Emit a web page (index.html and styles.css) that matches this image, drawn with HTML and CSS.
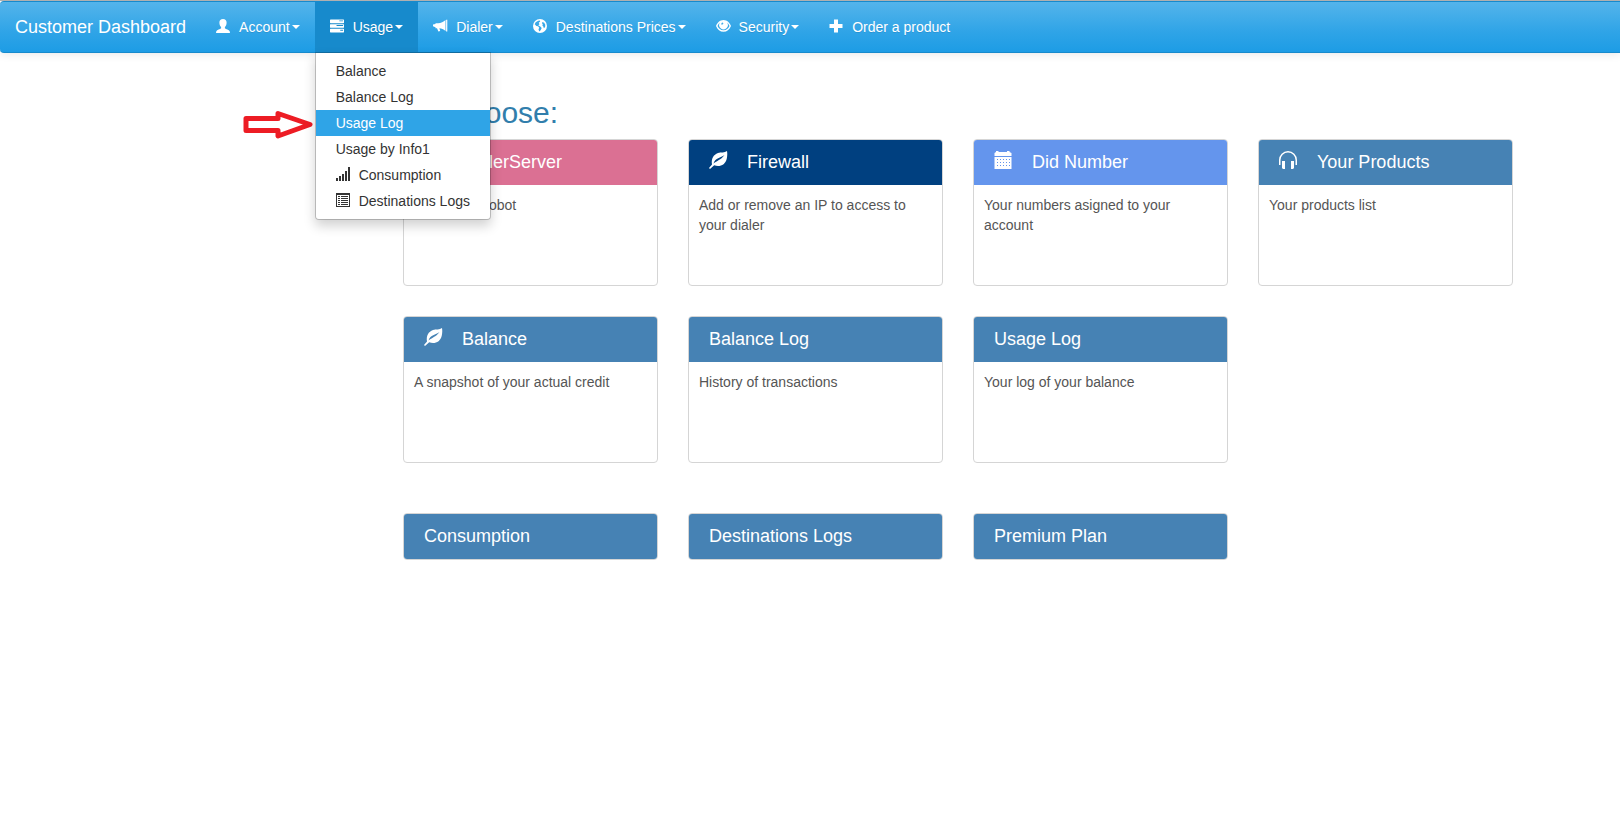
FILE: index.html
```html
<!DOCTYPE html>
<html lang="en">
<head>
  <meta charset="UTF-8">
  <meta name="viewport" content="width=device-width, initial-scale=1">
  <title>Customer Dashboard</title>
  <link rel="stylesheet" href="styles.css">
</head>
<body>
  <nav class="navbar">
    <a class="navbar-brand" href="#">Customer Dashboard</a>
    <ul class="nav">
      <li>
        <a href="#"><svg class="icon" viewBox="0 0 14 14"><path d="M7 0C9.300 0 10.600 1.300 10.600 3.500C10.600 5.500 9.900 7 8.900 8V9.200C9.900 10.200 13 10.800 13.700 12.200L14 14H0L.3 12.200C1 10.800 4.100 10.200 5.100 9.200V8C4.100 7 3.400 5.500 3.400 3.500C3.400 1.300 4.700 0 7 0Z"/></svg>Account<span class="caret"></span></a>
      </li>
      <li class="open">
        <a href="#"><svg class="icon" viewBox="0 0 15 14"><path fill-rule="evenodd" d="M.5 0H14.500L15 .5V3.500L14.500 4H.5L0 3.500V.5ZM10 1V2H14V1ZM.5 5H14.500L15 5.500V8.500L14.500 9H.5L0 8.500V5.500ZM7 6V7H14V6ZM.5 10H14.500L15 10.500V13.500L14.500 14H.5L0 13.500V10.500ZM11 11V12H14V11Z"/></svg>Usage<span class="caret"></span></a>
        <ul class="dropdown-menu">
          <li><a href="#">Balance</a></li>
          <li><a href="#">Balance Log</a></li>
          <li><a class="active" href="#">Usage Log</a></li>
          <li><a href="#">Usage by Info1</a></li>
          <li><a href="#"><svg class="icon" viewBox="0 0 14 14"><path d="M0 11H2V14H0ZM3 9H5V14H3ZM6 7H8V14H6ZM9 4H11V14H9ZM12 0H14V14H12Z"/></svg>Consumption</a></li>
          <li><a href="#"><svg class="icon" viewBox="0 0 14 14"><path fill-rule="evenodd" d="M0 0H14V14H0ZM1 2V13H13V2ZM2 3H4V4H2ZM5 3H12V4H5ZM2 5H4V6H2ZM5 5H12V6H5ZM2 7H4V8H2ZM5 7H12V8H5ZM2 9H4V10H2ZM5 9H12V10H5ZM2 11H4V12H2ZM5 11H12V12H5Z"/></svg>Destinations Logs</a></li>
        </ul>
      </li>
      <li>
        <a href="#"><svg class="icon" viewBox="0 0 14 14"><path d="M13.100 .8H14.300V12.500H13.100ZM12.500 1V12C10.500 10.200 8.500 9.500 6.400 9.300L7.200 12L5.400 12.500L4 9.200H2.500V8.200L0 7.300V5.500L2.500 5V4.300H5C8 4.100 10.500 3 12.500 1Z"/></svg>Dialer<span class="caret"></span></a>
      </li>
      <li>
        <a href="#"><svg class="icon" viewBox="0 0 14 14"><path fill-rule="evenodd" d="M7 0A7 7 0 1 1 7 14A7 7 0 0 1 7 0ZM5.300 1.800L2.700 3.200L1.700 5.300L3.400 7.100L5 7.300L6.300 8.700L5.500 10.200L6.200 12.400L7.600 11.200L8.700 8.900L7.300 7.400L5.200 6.300L6.500 5.300L5.700 3.800L7.200 2.500L6.800 1.500ZM9.500 3L8.900 4.300L9.900 5.300L9.300 6.300L10.300 7.500L10.900 9.300L12.100 8L12.300 5.800L11.200 3.700Z"/></svg>Destinations Prices<span class="caret"></span></a>
      </li>
      <li>
        <a href="#"><svg class="icon wide" viewBox="0 0 15 14"><path fill-rule="evenodd" d="M7.500 1C11.200 1 13.700 3.800 15 7C13.400 10.500 11 12.800 7.500 12.800C4 12.800 1.600 10.500 0 7C1.300 3.800 3.800 1 7.500 1ZM4 3.600C2.900 4.500 2.100 5.700 1.500 7C2.700 9.500 4.600 11.200 7.500 11.200C10.400 11.200 12.300 9.500 13.500 7C12.900 5.700 12.100 4.500 11 3.600A4.300 4.300 0 1 1 4 3.600ZM6.800 3.600A1.600 1.600 0 0 0 5.400 5.600L6.400 6C6.400 5.200 6.800 4.700 7.500 4.600Z"/></svg>Security<span class="caret"></span></a>
      </li>
      <li>
        <a href="#"><svg class="icon" viewBox="0 0 14 14"><path d="M5 .5H9V5H13.500V9H9V13.500H5V9H.5V5H5Z"/></svg>Order a product</a>
      </li>
    </ul>
  </nav>

  <!-- pointer to the usage log entry -->
  <svg class="pointer" viewBox="0 0 70 28"><path d="M3 7.500H35V2.500L67 13.500L35 25V19.500H3Z"/></svg>

  <main class="content">
    <h2>Please choose:</h2>
    <div class="cards">
      <a class="card" href="#">
        <h4 class="card-title pink"><svg class="icon" viewBox="0 0 18 18"><path d="M17 1H18V15H17ZM16 1.500V14.500C13.500 12.500 11 11.500 8 11.300L9 15L7 15.500L5 11H3V10L0 9V6.500L3 6V5.300H6.500C10 5.200 13.500 4 16 1.500Z"/></svg>DialerServer</h4>
        <p>Your dialer robot</p>
      </a>
      <a class="card" href="#">
        <h4 class="card-title navy"><svg class="icon" viewBox="0 0 18 18"><path fill-rule="evenodd" d="M18 0C18.500 2.500 18.300 5 17.800 7.500C16.500 14 10.500 16.500 5.200 14.300L1 18L0 17L3 13.500C2 8 4.500 3.500 9 2C12 1 15.500 2 18 0ZM4.500 12.500C8 9.500 11.500 9.300 15.500 4C11.500 7 6.500 6.500 4.500 12.500Z"/></svg>Firewall</h4>
        <p>Add or remove an IP to access to your dialer</p>
      </a>
      <a class="card" href="#">
        <h4 class="card-title blue"><svg class="icon" viewBox="0 0 18 18"><path fill-rule="evenodd" d="M.5 5V2L2 1V0H4.500V1H13V0H15.500V1L17.500 2V5ZM.5 6H17.500V18H.5ZM3 8V9H4V8ZM6 8V9H7V8ZM9 8V9H10V8ZM12 8V9H13V8ZM15 8V9H16V8ZM3 11V12H4V11ZM6 11V12H7V11ZM9 11V12H10V11ZM12 11V12H13V11ZM15 11V12H16V11ZM3 14V15H4V14ZM6 14V15H7V14ZM9 14V15H10V14ZM12 14V15H13V14ZM15 14V15H16V14Z"/></svg>Did Number</h4>
        <p>Your numbers asigned to your account</p>
      </a>
      <a class="card" href="#">
        <h4 class="card-title"><svg class="icon" viewBox="0 0 18 18"><path d="M0 14V9A9 9 0 0 1 18 9V14H16.500V9A7.500 7.500 0 0 0 1.500 9V14ZM3 10H6V18H4L3 17ZM12 10H15V17L14 18H12Z"/></svg>Your Products</h4>
        <p>Your products list</p>
      </a>
      <a class="card" href="#">
        <h4 class="card-title"><svg class="icon" viewBox="0 0 18 18"><path fill-rule="evenodd" d="M18 0C18.500 2.500 18.300 5 17.800 7.500C16.500 14 10.500 16.500 5.200 14.300L1 18L0 17L3 13.500C2 8 4.500 3.500 9 2C12 1 15.500 2 18 0ZM4.500 12.500C8 9.500 11.500 9.300 15.500 4C11.500 7 6.500 6.500 4.500 12.500Z"/></svg>Balance</h4>
        <p>A snapshot of your actual credit</p>
      </a>
      <a class="card" href="#">
        <h4 class="card-title">Balance Log</h4>
        <p>History of transactions</p>
      </a>
      <a class="card" href="#">
        <h4 class="card-title">Usage Log</h4>
        <p>Your log of your balance</p>
      </a>
    </div>
    <div class="cards">
      <a class="card" href="#"><h4 class="card-title">Consumption</h4></a>
      <a class="card" href="#"><h4 class="card-title">Destinations Logs</h4></a>
      <a class="card" href="#"><h4 class="card-title">Premium Plan</h4></a>
    </div>
  </main>
</body>
</html>
```
FILE: styles.css
```css
* {
  box-sizing: border-box;
}
body {
  margin: 0;
  font-family: Arial, "Liberation Sans", sans-serif;
  font-size: 14px;
  line-height: 20px;
  color: #555;
  background: #fff;
  border-top: 1px solid #b0b0b0;
}
a {
  color: inherit;
  text-decoration: none;
}
ul {
  list-style: none;
  margin: 0;
  padding: 0;
}
.icon {
  width: 14px;
  height: 14px;
  flex: none;
  overflow: visible;
  fill: currentColor;
}

/* navbar */
.navbar {
  display: flex;
  border: 1px solid #178acc;
  border-width: 1px 0;
  border-radius: 4px 0 0 4px;
  background: linear-gradient(#54b4eb, #2fa4e7 60%, #1d9ce5);
  box-shadow: 0 1px 10px rgba(0,0,0,0.1);
  color: #fff;
}
.navbar-brand {
  padding: 15px;
  font-size: 18px;
}
.nav {
  display: flex;
}
.nav > li {
  position: relative;
}
.nav > li > a {
  display: flex;
  align-items: center;
  padding: 15px;
  text-shadow: 0 1px 0 rgba(0,0,0,0.1);
}
.nav .icon {
  margin-right: 9px;
}
.nav > li > a .icon {
  margin-bottom: 2px;
}
.nav .wide {
  width: 15px;
  margin-right: 8px;
}
.nav > .open > a {
  background: #178acc;
}
.caret {
  margin-left: 2px;
  border-top: 4px solid;
  border-left: 4px solid transparent;
  border-right: 4px solid transparent;
}
.dropdown-menu {
  position: absolute;
  top: 100%;
  left: 0;
  z-index: 10;
  padding: 5px 0;
  background: #fff;
  background-clip: padding-box;
  border: 1px solid rgba(0,0,0,0.2);
  border-radius: 0 0 4px 4px;
  box-shadow: 0 6px 12px rgba(0,0,0,0.18);
  color: #333;
  white-space: nowrap;
}
.dropdown-menu a {
  display: flex;
  align-items: center;
  padding: 3px 20px;
}
.dropdown-menu .icon {
  margin-bottom: 2px;
}
.dropdown-menu .active {
  background: #2fa4e7;
  color: #fff;
}

.pointer {
  position: absolute;
  top: 111px;
  left: 243px;
  width: 70px;
  height: 28px;
  fill: none;
  stroke: #ed1c24;
  stroke-width: 5px;
  stroke-linejoin: round;
}

/* cards */
.content {
  padding: 43px 107px 43px 353px;
}
.content h2 {
  margin: 0 0 10px;
  font-size: 30px;
  font-weight: 500;
  line-height: 33px;
  color: #317eac;
}
.cards {
  display: grid;
  grid-template-columns: repeat(4, 1fr);
  gap: 30px;
  margin: 0 0 50px 50px;
}
.card {
  border: 1px solid #d5d5d5;
  border-radius: 4px;
  overflow: hidden;
}
.card-title {
  display: flex;
  align-items: center;
  gap: 20px;
  height: 45px;
  margin: 0;
  padding: 0 20px 2px;
  font-size: 18px;
  font-weight: 500;
  background: #4682b4;
  color: #fff;
}
.card-title .icon {
  width: 18px;
  height: 18px;
  margin-bottom: 4px;
}
.card p {
  min-height: 100px;
  margin: 0;
  padding: 10px;
}
.pink {
  background: #db7093;
}
.navy {
  background: #004080;
}
.blue {
  background: #6495ed;
}
```
